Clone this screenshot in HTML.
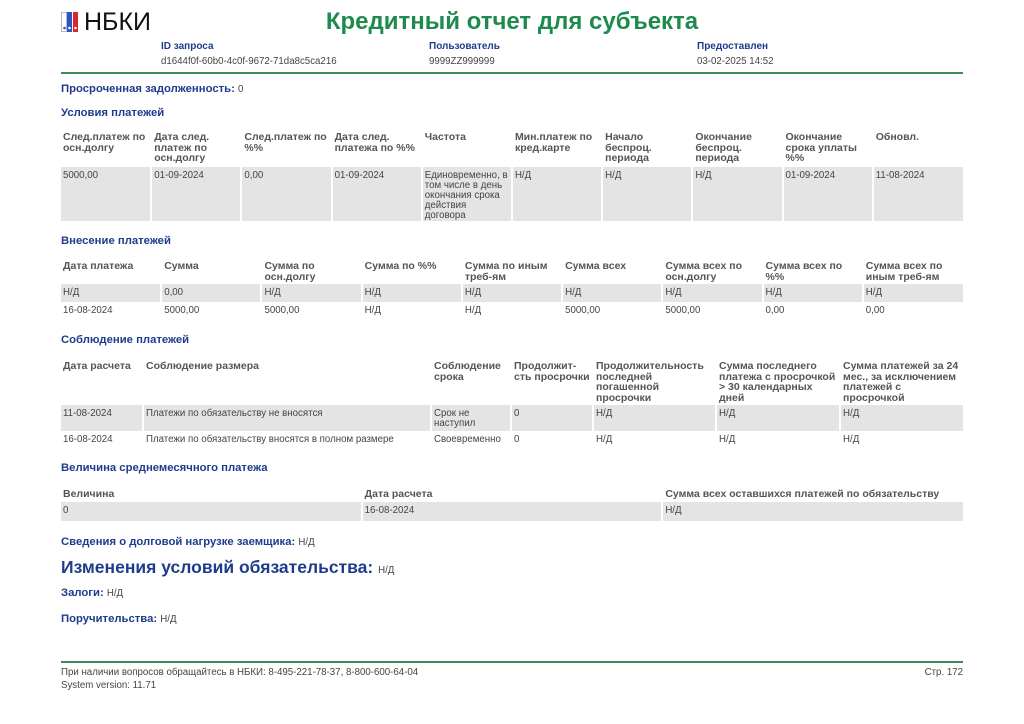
<!DOCTYPE html>
<html><head><meta charset="utf-8"><style>
*{margin:0;padding:0;box-sizing:border-box}
body{width:1024px;height:724px;background:#fff;position:relative;font-family:"Liberation Sans",Arial,sans-serif;color:#333;overflow:hidden}
.a{position:absolute;white-space:nowrap}
.b{color:#1f3c8c;font-weight:bold}
.t{position:absolute;left:61px;width:902px;border-collapse:collapse;table-layout:fixed}
.t td{vertical-align:top;padding:4px 2px 0 2px;font-size:9.7px;line-height:10px;color:#444;border-left:2px solid #fff;overflow:hidden}
.t td:first-child{border-left:none}
.t tr.h td{font-weight:bold;color:#555;font-size:10.5px;line-height:10.5px;padding-top:2px}
.t tr.g td{background:#e4e4e4}
.v{font-size:9.7px;color:#444;font-weight:normal}
.s{font-size:11.3px}
</style></head><body>
<div class="a" style="left:61px;top:12px;width:18px;height:20px">
<svg width="18" height="20" viewBox="0 0 18 20"><rect x="0.5" y="0.5" width="5" height="19" fill="#fff" stroke="#bbb"/><rect x="6" y="0" width="5" height="20" fill="#2a56c6"/><rect x="12" y="0" width="5" height="20" fill="#d9262c"/><circle cx="3.5" cy="16" r="1.3" fill="#2a56c6"/><circle cx="8.5" cy="16" r="1.3" fill="#fff"/><circle cx="14.5" cy="16" r="1.3" fill="#fff"/></svg></div>
<div class="a" style="left:84px;top:8px;font-size:25px;color:#111">НБКИ</div>
<div class="a" style="left:0;width:1024px;text-align:center;top:8px;font-size:24px;font-weight:bold;color:#1e8a4e">Кредитный отчет для субъекта</div>
<div class="a b" style="left:161px;top:41px;font-size:10px">ID запроса</div>
<div class="a v" style="left:161px;top:56px">d1644f0f-60b0-4c0f-9672-71da8c5ca216</div>
<div class="a b" style="left:429px;top:41px;font-size:10px">Пользователь</div>
<div class="a v" style="left:429px;top:56px">9999ZZ999999</div>
<div class="a b" style="left:697px;top:41px;font-size:10px">Предоставлен</div>
<div class="a v" style="left:697px;top:56px">03-02-2025 14:52</div>
<div class="a" style="left:61px;top:72px;width:902px;height:2px;background:#3a8a5e"></div>

<div class="a b s" style="left:61px;top:83px">Просроченная задолженность: <span class="v">0</span></div>
<div class="a b s" style="left:61px;top:107px">Условия платежей</div>
<table class="t" style="top:130px">
<tr class="h" style="height:37px"><td>След.платеж по осн.долгу</td><td>Дата след. платеж по осн.долгу</td><td>След.платеж по %%</td><td>Дата след. платежа по %%</td><td>Частота</td><td>Мин.платеж по кред.карте</td><td>Начало беспроц. периода</td><td>Окончание беспроц. периода</td><td>Окончание срока уплаты %%</td><td>Обновл.</td></tr>
<tr class="g" style="height:53px"><td>5000,00</td><td>01-09-2024</td><td>0,00</td><td>01-09-2024</td><td>Единовременно, в том числе в день окончания срока действия договора</td><td>Н/Д</td><td>Н/Д</td><td>Н/Д</td><td>01-09-2024</td><td>11-08-2024</td></tr>
</table>

<div class="a b s" style="left:61px;top:235px">Внесение платежей</div>
<table class="t" style="top:259px">
<tr class="h" style="height:25px"><td>Дата платежа</td><td>Сумма</td><td>Сумма по осн.долгу</td><td>Сумма по %%</td><td>Сумма по иным треб-ям</td><td>Сумма всех</td><td>Сумма всех по осн.долгу</td><td>Сумма всех по %%</td><td>Сумма всех по иным треб-ям</td></tr>
<tr class="g" style="height:18px"><td>Н/Д</td><td>0,00</td><td>Н/Д</td><td>Н/Д</td><td>Н/Д</td><td>Н/Д</td><td>Н/Д</td><td>Н/Д</td><td>Н/Д</td></tr>
<tr style="height:18px"><td>16-08-2024</td><td>5000,00</td><td>5000,00</td><td>Н/Д</td><td>Н/Д</td><td>5000,00</td><td>5000,00</td><td>0,00</td><td>0,00</td></tr>
</table>

<div class="a b s" style="left:61px;top:334px">Соблюдение платежей</div>
<table class="t" style="top:359px">
<colgroup><col style="width:82px"><col style="width:288px"><col style="width:80px"><col style="width:82px"><col style="width:123px"><col style="width:124px"><col style="width:123px"></colgroup>
<tr class="h" style="height:46px"><td>Дата расчета</td><td>Соблюдение размера</td><td>Соблюдение срока</td><td>Продолжит-сть просрочки</td><td>Продолжительность последней погашенной просрочки</td><td>Сумма последнего платежа с просрочкой &gt; 30 календарных дней</td><td>Сумма платежей за 24 мес., за исключением платежей с просрочкой</td></tr>
<tr class="g" style="height:26px"><td>11-08-2024</td><td>Платежи по обязательству не вносятся</td><td>Срок не наступил</td><td>0</td><td>Н/Д</td><td>Н/Д</td><td>Н/Д</td></tr>
<tr style="height:18px"><td>16-08-2024</td><td>Платежи по обязательству вносятся в полном размере</td><td>Своевременно</td><td>0</td><td>Н/Д</td><td>Н/Д</td><td>Н/Д</td></tr>
</table>

<div class="a b s" style="left:61px;top:462px">Величина среднемесячного платежа</div>
<table class="t" style="top:487px">
<tr class="h" style="height:15px"><td>Величина</td><td>Дата расчета</td><td>Сумма всех оставшихся платежей по обязательству</td></tr>
<tr class="g" style="height:19px"><td>0</td><td>16-08-2024</td><td>Н/Д</td></tr>
</table>

<div class="a b s" style="left:61px;top:536px">Сведения о долговой нагрузке заемщика: <span class="v">Н/Д</span></div>
<div class="a b" style="left:61px;top:557px;font-size:17.5px">Изменения условий обязательства: <span class="v">Н/Д</span></div>
<div class="a b s" style="left:61px;top:587px">Залоги: <span class="v">Н/Д</span></div>
<div class="a b s" style="left:61px;top:613px">Поручительства: <span class="v">Н/Д</span></div>

<div class="a" style="left:61px;top:661px;width:902px;height:2px;background:#3a8a5e"></div>
<div class="a v" style="left:61px;top:667px">При наличии вопросов обращайтесь в НБКИ: 8-495-221-78-37, 8-800-600-64-04</div>
<div class="a v" style="left:61px;top:680px">System version: 11.71</div>
<div class="a v" style="left:900px;width:63px;text-align:right;top:667px">Стр. 172</div>
</body></html>
